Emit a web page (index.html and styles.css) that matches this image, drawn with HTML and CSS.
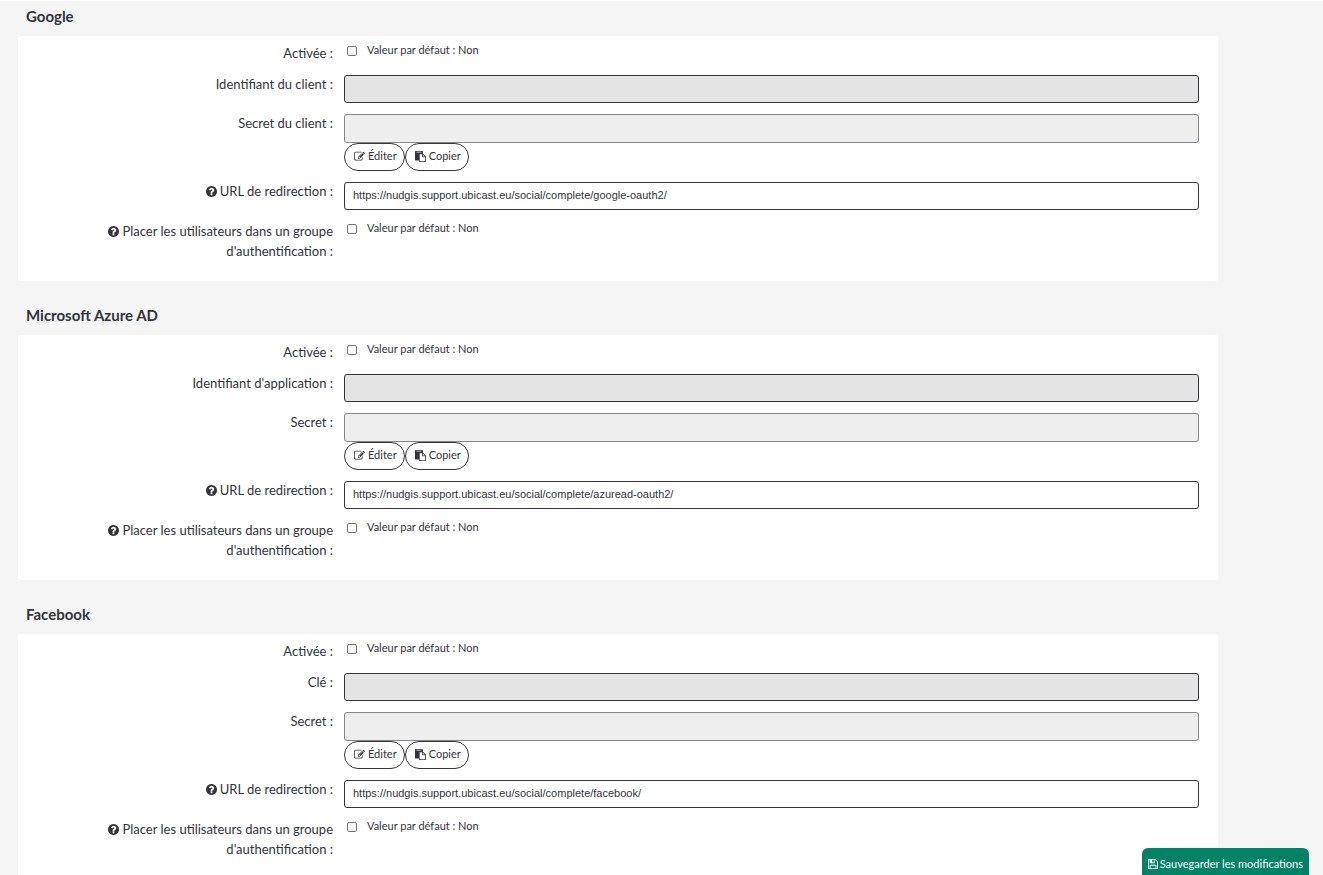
FILE: index.html
```
<!DOCTYPE html>
<html lang="fr">
<head>
<meta charset="utf-8">
<title>Authentification</title>
<link rel="stylesheet" href="styles.css">
</head>
<body>
<svg class="sprite" aria-hidden="true">
<symbol id="help" viewBox="128 128 1536 1536"><path d="M1024 1376v-192q0-14-9-23t-23-9h-192q-14 0-23 9t-9 23v192q0 14 9 23t23 9h192q14 0 23-9t9-23zm256-672q0-88-55.500-163t-138.500-116-170-41q-243 0-371 213-15 24 8 42l132 100q7 6 19 6 16 0 25-12 53-68 86-92 34-24 86-24 48 0 85.500 26t37.500 59q0 38-20 61t-68 45q-63 28-115.500 86.500t-52.500 125.500v36q0 14 9 23t23 9h192q14 0 23-9t9-23q0-19 21.500-49.500t54.500-49.500q32-18 49-28.500t46-35 44.500-48 28-60.500 12.500-81zm384 192q0 209-103 385.500t-279.500 279.500-385.500 103-385.500-103-279.500-279.500-103-385.500 103-385.500 279.500-279.500 385.500-103 385.500 103 279.500 279.500 103 385.500z"/></symbol>
<symbol id="edit" viewBox="0 0 1792 1792"><path d="M888 1184l116-116-152-152-116 116v56h96v96h56zm440-720q-16-16-33 1l-350 350q-17 17-1 33t33-1l350-350q17-17 1-33zm80 594v190q0 119-84.500 203.500t-203.500 84.500h-832q-119 0-203.500-84.500t-84.500-203.500v-832q0-119 84.500-203.500t203.500-84.500h832q63 0 117 25 15 7 18 23 3 17-9 29l-49 49q-14 14-32 8-23-6-45-6h-832q-66 0-113 47t-47 113v832q0 66 47 113t113 47h832q66 0 113-47t47-113v-126q0-13 9-22l64-64q15-15 35-7t20 29zm-96-738l288 288-672 672h-288v-288zm444 132l-92 92-288-288 92-92q28-28 68-28t68 28l152 152q28 28 28 68t-28 68z"/></symbol>
<symbol id="copy" viewBox="0 0 1792 1792"><path d="M768 1664h896v-640h-416q-40 0-68-28t-28-68v-416h-384v1152zm256-1440v-64q0-13-9.500-22.500t-22.500-9.500h-704q-13 0-22.500 9.500t-9.500 22.500v64q0 13 9.500 22.500t22.500 9.500h704q13 0 22.500-9.500t9.500-22.500zm256 672h299l-299-299v299zm512 128v672q0 40-28 68t-68 28h-960q-40 0-68-28t-28-68v-160h-544q-40 0-68-28t-28-68v-1344q0-40 28-68t68-28h1088q40 0 68 28t28 68v328q21 13 36 28l408 408q28 28 48 76t20 88z"/></symbol>
<symbol id="save" viewBox="128 128 1536 1536"><path d="M512 1536h768v-384h-768v384zm896 0h128v-896q0-14-10-38.500t-20-34.500l-281-281q-10-10-34-20t-39-10v416q0 40-28 68t-68 28h-576q-40 0-68-28t-28-68v-416h-128v1280h128v-416q0-40 28-68t68-28h832q40 0 68 28t28 68v416zm-384-928v-320q0-13-9.500-22.500t-22.500-9.500h-192q-13 0-22.500 9.500t-9.500 22.500v320q0 13 9.500 22.500t22.500 9.500h192q13 0 22.500-9.500t9.500-22.500zm640 32v928q0 40-28 68t-68 28h-1344q-40 0-68-28t-28-68v-1344q0-40 28-68t68-28h928q40 0 88 20t76 48l280 280q28 28 48 76t20 88z"/></symbol>
</svg>
<form class="settings">
<section class="provider">
<h2 class="title">Google</h2>
<div class="card">
<div class="row"><label class="label low" for="g-on">Activée :</label><div class="check"><input type="checkbox" id="g-on"><span class="hint">Valeur par défaut : Non</span></div></div>
<div class="row"><label class="label" for="g-id">Identifiant du client :</label><input class="field filled" type="text" id="g-id" readonly></div>
<div class="row"><label class="label" for="g-secret">Secret du client :</label><div class="secret"><input class="field locked" type="password" id="g-secret" disabled><div class="actions"><button class="pill" type="button"><svg class="icon"><use href="#edit"/></svg>Éditer</button><button class="pill" type="button"><svg class="icon"><use href="#copy"/></svg>Copier</button></div></div></div>
<div class="row"><label class="label" for="g-url"><svg class="help"><use href="#help"/></svg>URL de redirection :</label><input class="field" type="text" id="g-url" value="https://nudgis.support.ubicast.eu/social/complete/google-oauth2/" readonly></div>
<div class="row"><label class="label low" for="g-group"><svg class="help"><use href="#help"/></svg>Placer les utilisateurs dans un groupe d'authentification :</label><div class="check"><input type="checkbox" id="g-group"><span class="hint">Valeur par défaut : Non</span></div></div>
</div>
</section>
<section class="provider">
<h2 class="title">Microsoft Azure AD</h2>
<div class="card">
<div class="row"><label class="label low" for="m-on">Activée :</label><div class="check"><input type="checkbox" id="m-on"><span class="hint">Valeur par défaut : Non</span></div></div>
<div class="row"><label class="label" for="m-id">Identifiant d'application :</label><input class="field filled" type="text" id="m-id" readonly></div>
<div class="row"><label class="label" for="m-secret">Secret :</label><div class="secret"><input class="field locked" type="password" id="m-secret" disabled><div class="actions"><button class="pill" type="button"><svg class="icon"><use href="#edit"/></svg>Éditer</button><button class="pill" type="button"><svg class="icon"><use href="#copy"/></svg>Copier</button></div></div></div>
<div class="row"><label class="label" for="m-url"><svg class="help"><use href="#help"/></svg>URL de redirection :</label><input class="field" type="text" id="m-url" value="https://nudgis.support.ubicast.eu/social/complete/azuread-oauth2/" readonly></div>
<div class="row"><label class="label low" for="m-group"><svg class="help"><use href="#help"/></svg>Placer les utilisateurs dans un groupe d'authentification :</label><div class="check"><input type="checkbox" id="m-group"><span class="hint">Valeur par défaut : Non</span></div></div>
</div>
</section>
<section class="provider">
<h2 class="title">Facebook</h2>
<div class="card">
<div class="row"><label class="label low" for="f-on">Activée :</label><div class="check"><input type="checkbox" id="f-on"><span class="hint">Valeur par défaut : Non</span></div></div>
<div class="row"><label class="label" for="f-id">Clé :</label><input class="field filled" type="text" id="f-id" readonly></div>
<div class="row"><label class="label" for="f-secret">Secret :</label><div class="secret"><input class="field locked" type="password" id="f-secret" disabled><div class="actions"><button class="pill" type="button"><svg class="icon"><use href="#edit"/></svg>Éditer</button><button class="pill" type="button"><svg class="icon"><use href="#copy"/></svg>Copier</button></div></div></div>
<div class="row"><label class="label" for="f-url"><svg class="help"><use href="#help"/></svg>URL de redirection :</label><input class="field" type="text" id="f-url" value="https://nudgis.support.ubicast.eu/social/complete/facebook/" readonly></div>
<div class="row"><label class="label low" for="f-group"><svg class="help"><use href="#help"/></svg>Placer les utilisateurs dans un groupe d'authentification :</label><div class="check"><input type="checkbox" id="f-group"><span class="hint">Valeur par défaut : Non</span></div></div>
</div>
</section>
<button class="save" type="submit"><svg class="save-icon"><use href="#save"/></svg>Sauvegarder les modifications</button>
</form>
</body>
</html>
```
FILE: styles.css
```
* { box-sizing: border-box; }
html { scrollbar-width: none; }
body {
  margin: 0;
  background: #f5f5f5;
  border-top: 1px solid #fff;
  color: #33333a;
  font: 13px/20px Lato, sans-serif;
}
.sprite { display: none; }
svg { fill: currentColor; }
.settings { padding: 0 18px; }
.provider { max-width: 1200px; margin-bottom: 19px; }
.title {
  margin: 0;
  padding: 5px 8px 10px;
  font-size: 15px;
  line-height: 20px;
  font-weight: 700;
}
.card {
  display: flex;
  flex-direction: column;
  gap: 11px;
  padding: 7px 19px 20px 0;
  background: #fff;
  border-radius: 3px;
}
.row {
  display: grid;
  grid-template-columns: 315px 1fr;
  column-gap: 11px;
  align-items: start;
}
.row:first-child { min-height: 21px; }
.label {
  margin-top: -1px;
  padding-left: 60px;
  text-align: right;
}
.label.low { margin-top: 0; }
.help {
  width: 11px;
  height: 11px;
  margin-right: 3px;
  vertical-align: -1px;
}
.check {
  display: flex;
  align-items: center;
  gap: 10px;
  height: 16px;
}
.check input {
  appearance: none;
  width: 10px;
  height: 10px;
  margin: 0 0 0 3px;
  border: 1px solid #767676;
  border-radius: 2px;
  background: #fff;
}
.check input:checked { background: #008266; }
.hint { padding-bottom: 2px; font-size: 11px; line-height: 14px; }
.field {
  display: block;
  width: 100%;
  height: 28px;
  margin: 0;
  padding: 0 8px 2px;
  border: 1px solid #33333a;
  border-radius: 3px;
  background: #fff;
  color: #33333a;
  font: 11px "Liberation Sans", Arial, sans-serif;
}
.filled { background: #e4e4e4; }
.locked { height: 29px; background: #eee; border-color: #85858a; }
.actions { display: flex; }
.pill {
  display: flex;
  align-items: center;
  gap: 3px;
  height: 28px;
  padding: 0 7px 2px 9px;
  border: 1px solid #33333a;
  border-radius: 14px;
  background: #fff;
  color: #33333a;
  font: 11px/14px Lato, sans-serif;
}
.icon { width: 11px; height: 11px; }
.save {
  position: fixed;
  right: 14px;
  bottom: 0;
  display: flex;
  align-items: center;
  gap: 2px;
  height: 27px;
  padding: 4px 6px 0;
  border: 0;
  border-radius: 6px 6px 0 0;
  background: #008266;
  color: #fff;
  font: 11px/14px Lato, sans-serif;
}
.save-icon { width: 10px; height: 10px; }
```
